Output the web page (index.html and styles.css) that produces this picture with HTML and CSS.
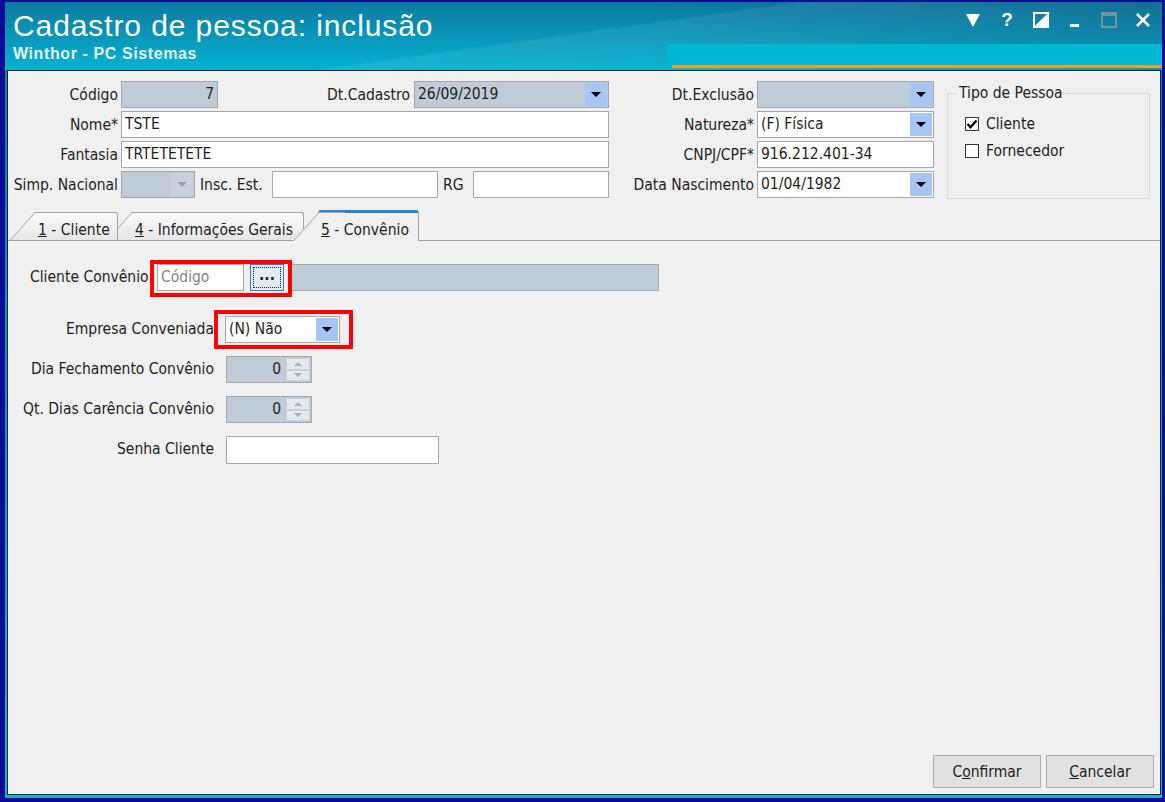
FILE: index.html
```html
<!DOCTYPE html>
<html lang="pt-BR">

<head>
    <meta charset="UTF-8">
    <title>Cadastro de pessoa: inclusão</title>
    <link rel="stylesheet" href="styles.css">
</head>

<body>
    <div class="window">
        <header class="titlebar">
            <h1 class="title">Cadastro de pessoa: inclusão</h1>
            <div class="controls">
                <svg width="16" height="16" viewBox="0 0 16 16"><path d="M1 2H15L8 15Z" fill="#fff"/></svg>
                <span class="help">?</span>
                <svg width="16" height="16" viewBox="0 0 16 16"><rect x="1" y="1" width="14" height="14" fill="none" stroke="#fff" stroke-width="2"/><path d="M15 1V15H1Z" fill="#fff"/></svg>
                <svg width="16" height="16" viewBox="0 0 16 16"><rect x="3" y="12" width="9" height="3" fill="#fff"/></svg>
                <svg width="16" height="16" viewBox="0 0 16 16"><rect x="1" y="1" width="14" height="14" fill="none" stroke="#6f93a0" stroke-width="2"/><rect x="1" y="1" width="14" height="3" fill="#6f93a0"/></svg>
                <svg width="16" height="16" viewBox="0 0 16 16"><path d="M2 2L14 14M14 2L2 14" stroke="#fff" stroke-width="2.6"/></svg>
            </div>
            <div class="subtitle">Winthor - PC Sistemas</div>
            <div class="accent"></div>
        </header>

        <div class="panel">
            <div class="head">
                <div class="head-grid">
                    <label class="lbl">Código</label>
                    <div class="cell split">
                        <div class="field disabled num w-codigo">7</div>
                        <div class="cell">
                            <label class="lbl">Dt.Cadastro</label>
                            <div class="combo disabled w-cadastro"><span>26/09/2019</span><i class="drop"></i></div>
                        </div>
                    </div>
                    <label class="lbl">Dt.Exclusão</label>
                    <div class="combo disabled"><span></span><i class="drop"></i></div>

                    <label class="lbl">Nome*</label>
                    <div class="field">TSTE</div>
                    <label class="lbl">Natureza*</label>
                    <div class="combo"><span>(F) Física</span><i class="drop"></i></div>

                    <label class="lbl">Fantasia</label>
                    <div class="field">TRTETETETE</div>
                    <label class="lbl">CNPJ/CPF*</label>
                    <div class="field">916.212.401-34</div>

                    <label class="lbl">Simp. Nacional</label>
                    <div class="cell">
                        <div class="combo disabled w-simp"><span></span><i class="drop off"></i></div>
                        <label class="lbl-inline w-lbl-insc">Insc. Est.</label>
                        <div class="field w-insc"></div>
                        <label class="lbl-inline w-lbl-rg">RG</label>
                        <div class="field w-rg"></div>
                    </div>
                    <label class="lbl">Data Nascimento</label>
                    <div class="combo"><span>01/04/1982</span><i class="drop"></i></div>
                </div>

                <fieldset class="group">
                    <legend>Tipo de Pessoa</legend>
                    <div class="check">
                        <span class="box"><svg width="12" height="12" viewBox="0 0 12 12"><path d="M1.5 6L4.5 9.2L10.5 2.5" fill="none" stroke="#000" stroke-width="2.4"/></svg></span>Cliente
                    </div>
                    <div class="check"><span class="box"></span>Fornecedor</div>
                </fieldset>
            </div>

            <div class="tabs">
                <div class="tab t1"><u>1</u> - Cliente</div>
                <div class="tab t2"><u>4</u> - Informações Gerais</div>
                <div class="tab active"><u>5</u> - Convênio</div>
            </div>

            <div class="page">
                <div class="row">
                    <label class="lbl-conv">Cliente Convênio</label>
                    <div class="mark mark-conv">
                        <div class="field hint w-cod">Código</div>
                        <button class="dots" type="button">...</button>
                    </div>
                    <div class="field disabled w-nome"></div>
                </div>

                <div class="row row-emp">
                    <label class="lbl-page">Empresa Conveniada</label>
                    <div class="mark mark-emp">
                        <div class="combo w-emp"><span>(N) Não</span><i class="drop"></i></div>
                    </div>
                </div>

                <div class="row row-dia">
                    <label class="lbl-page">Dia Fechamento Convênio</label>
                    <div class="spin disabled"><span class="val">0</span><span class="arrows"><i class="up"></i><i class="down"></i></span></div>
                </div>

                <div class="row row-gap">
                    <label class="lbl-page">Qt. Dias Carência Convênio</label>
                    <div class="spin disabled"><span class="val">0</span><span class="arrows"><i class="up"></i><i class="down"></i></span></div>
                </div>

                <div class="row row-gap">
                    <label class="lbl-page">Senha Cliente</label>
                    <div class="field w-senha"></div>
                </div>

                <div class="actions">
                    <button class="btn" type="button">C<u>o</u>nfirmar</button>
                    <button class="btn" type="button"><u>C</u>ancelar</button>
                </div>
            </div>
        </div>
    </div>
</body>

</html>
```

FILE: styles.css
```css
* {
    box-sizing: border-box;
}

body {
    margin: 0;
    background: #0b0b96;
    font-family: "DejaVu Sans Condensed", "DejaVu Sans", sans-serif;
    font-stretch: condensed;
    font-size: 15.5px;
    color: #1e1e1e;
}

.window {
    width: 1165px;
    height: 802px;
    display: flex;
    flex-direction: column;
    border-style: solid;
    border-color: #0b0b96;
    border-width: 2px 3px 4px 5px;
    background: linear-gradient(180deg, #0a7ea4 0%, #0b9cc0 50%, #12b6d2 100%);
}

/* title bar */
.titlebar {
    height: 68px;
    display: grid;
    grid-template-columns: 1fr 495px;
    grid-template-rows: 32px 23px;
    row-gap: 3px;
    padding: 8px 0 0 8px;
    background:
        linear-gradient(172deg, rgba(255, 255, 255, 0) 48%, rgba(255, 255, 255, 0.07) 49%, rgba(255, 255, 255, 0.02) 80%),
        linear-gradient(90deg, rgba(4, 40, 70, 0) 55%, rgba(4, 40, 70, 0.18) 100%),
        linear-gradient(180deg, #0c79a0 0%, #0a93b8 45%, #04b2d0 100%);
}

.title {
    margin: 0;
    font: 30px/32px "Liberation Sans", Arial, sans-serif;
    letter-spacing: 0.9px;
    color: #fff;
}

.subtitle {
    font: bold 16px/18px "Liberation Sans", Arial, sans-serif;
    letter-spacing: 0.6px;
    color: #e4f5f9;
}

.controls {
    justify-self: end;
    align-self: start;
    display: flex;
    align-items: center;
    gap: 18px;
    height: 16px;
    margin-top: 2px;
    padding-right: 11px;
}

.controls svg {
    display: block;
}

.help {
    width: 16px;
    text-align: center;
    font: bold 19px/16px "Liberation Sans", Arial, sans-serif;
    color: #fff;
}

.accent {
    margin-top: -1px;
    background:
        linear-gradient(#f39d1e, #f39d1e) no-repeat 5px 100% / calc(100% - 5px) 3px,
        #00b7d5;
}

/* main panel */
.panel {
    flex: 1;
    display: flex;
    flex-direction: column;
    margin: 0 1px 3px 2px;
    border: 1px solid #1c2628;
    background: #f0f0f0;
}

.head {
    display: flex;
    align-items: flex-start;
    padding-top: 10px;
}

.head-grid {
    display: grid;
    grid-template-columns: 113px 488px 148px 177px;
    grid-auto-rows: 27px;
    row-gap: 3px;
    align-items: center;
}

.lbl {
    text-align: right;
    padding-right: 3px;
    white-space: nowrap;
}

.lbl-inline {
    padding-left: 5px;
    white-space: nowrap;
}

.w-lbl-insc { width: 77px; }
.w-lbl-rg { width: 35px; }

.cell {
    display: flex;
    align-items: center;
    height: 27px;
}

.split {
    justify-content: space-between;
}

.field {
    height: 27px;
    padding: 0 3px;
    border: 1px solid #a7a7a7;
    background: #fff;
    line-height: 25px;
    white-space: nowrap;
    overflow: hidden;
}

.disabled {
    background: #bfcbd7;
}

.num {
    text-align: right;
}

.hint {
    color: #858585;
}

.combo {
    display: flex;
    height: 27px;
    border: 1px solid #a7a7a7;
    background: #fff;
}

.combo.disabled {
    background: #bfcbd7;
}

.combo span {
    flex: 1;
    padding-left: 3px;
    line-height: 25px;
    white-space: nowrap;
}

.drop {
    width: 22px;
    margin: 1px 1px 1px 0;
    background: #a7c5f2;
    display: flex;
    align-items: center;
    justify-content: center;
}

.drop::after {
    content: '';
    border-left: 5px solid transparent;
    border-right: 5px solid transparent;
    border-top: 5px solid #000;
}

.drop.off {
    background: #c6d1db;
}

.drop.off::after {
    border-top-color: #9aa1a8;
}

.w-codigo { width: 97px; }
.w-cadastro { width: 195px; margin-left: 1px; }
.w-simp { width: 74px; }
.w-insc { width: 166px; }
.w-rg { flex: 1; }

/* tipo de pessoa */
.group {
    width: 203px;
    height: 114px;
    margin: 4px 0 0 13px;
    padding: 8px 0 0 17px;
    border: 1px solid #d9dcdf;
}

.group legend {
    margin-left: -8px;
    padding: 0 2px;
    line-height: 17px;
}

.check {
    display: flex;
    align-items: center;
    height: 27px;
}

.box {
    width: 14px;
    height: 14px;
    margin-right: 7px;
    border: 1px solid #333;
    background: #fff;
    display: flex;
    align-items: center;
    justify-content: center;
}

/* tabs */
.tabs {
    display: flex;
    align-items: flex-end;
    height: 31px;
    margin-top: 11px;
    padding-left: 27px;
    border-bottom: 1px solid #a3a3a3;
}

.tab {
    position: relative;
    height: 28px;
    padding: 6px 0 0 3px;
    line-height: 22px;
    white-space: nowrap;
    border-top: 1px solid #a3a3a3;
    border-right: 1px solid #a3a3a3;
    border-top-right-radius: 3px;
    background: linear-gradient(#fbfbfb, #e6e6e6);
}

.tab::before {
    content: '';
    position: absolute;
    top: -1px;
    bottom: 0;
    left: -25px;
    width: 25px;
    border-top: 1px solid #a3a3a3;
    border-left: 1px solid #a3a3a3;
    background: inherit;
    transform: skewX(-41.8deg);
    transform-origin: left bottom;
    z-index: -1;
}

.t1 {
    width: 83px;
    z-index: 3;
}

.t2 {
    width: 172px;
    margin-left: 14px;
    z-index: 2;
}

.tab.active {
    width: 101px;
    height: 31px;
    margin: 0 0 -1px 14px;
    border-top: 3px solid #2a84d8;
    border-top-left-radius: 3px;
    background: #f0f0f0;
    z-index: 4;
}

/* convenio page */
.page {
    flex: 1;
    display: flex;
    flex-direction: column;
    padding-top: 19px;
}

.row {
    display: flex;
    align-items: flex-start;
}

.lbl-conv {
    width: 120px;
    margin: 4px 0 0 22px;
    line-height: 27px;
    white-space: nowrap;
}

.lbl-page {
    width: 206px;
    text-align: right;
    line-height: 27px;
    white-space: nowrap;
}

.mark {
    position: relative;
    z-index: 1;
    display: flex;
    border: 4px solid #ff0000;
}

.mark-conv {
    width: 142px;
    gap: 6px;
    padding: 0 4px 2px 3px;
}

.w-cod { width: 87px; }

.dots {
    width: 34px;
    height: 27px;
    padding: 0 0 5px;
    border: 1px solid #2c7fd6;
    outline: 1px dotted #222;
    outline-offset: -4px;
    background: #e3ebf4;
    font: inherit;
    font-weight: bold;
    line-height: 20px;
    color: #1e1e1e;
}

.w-nome {
    width: 369px;
    margin: 4px 0 0 -2px;
}

.row-emp {
    margin-top: 13px;
}

.row-emp .lbl-page {
    margin-top: 6px;
}

.mark-emp {
    padding: 2px 9px 2px 7px;
}

.w-emp { width: 115px; }

.row-dia {
    margin-top: 7px;
}

.row-gap {
    margin-top: 13px;
}

.spin {
    display: flex;
    width: 86px;
    height: 27px;
    margin-left: 12px;
    border: 1px solid #a7a7a7;
}

.spin .val {
    flex: 1;
    text-align: right;
    padding-right: 4px;
    line-height: 25px;
}

.arrows {
    width: 24px;
    margin: 1px;
    display: flex;
    flex-direction: column;
    background: #d5dde4;
}

.arrows i {
    flex: 1;
    display: flex;
    align-items: center;
    justify-content: center;
    border: 1px solid #c9d1d8;
    background: #e4e8ec;
}

.arrows i::after {
    content: '';
    border-left: 4px solid transparent;
    border-right: 4px solid transparent;
}

.arrows .up::after {
    border-bottom: 4px solid #a9b0b7;
}

.arrows .down::after {
    border-top: 4px solid #a9b0b7;
}

.w-senha {
    width: 213px;
    height: 28px;
    margin-left: 12px;
}

.actions {
    margin-top: auto;
    display: flex;
    justify-content: flex-end;
    gap: 5px;
    padding: 0 6px 6px 0;
}

.btn {
    width: 108px;
    height: 33px;
    border: 1px solid #adadad;
    background: #e1e1e1;
    font: inherit;
    color: #1e1e1e;
}
```
